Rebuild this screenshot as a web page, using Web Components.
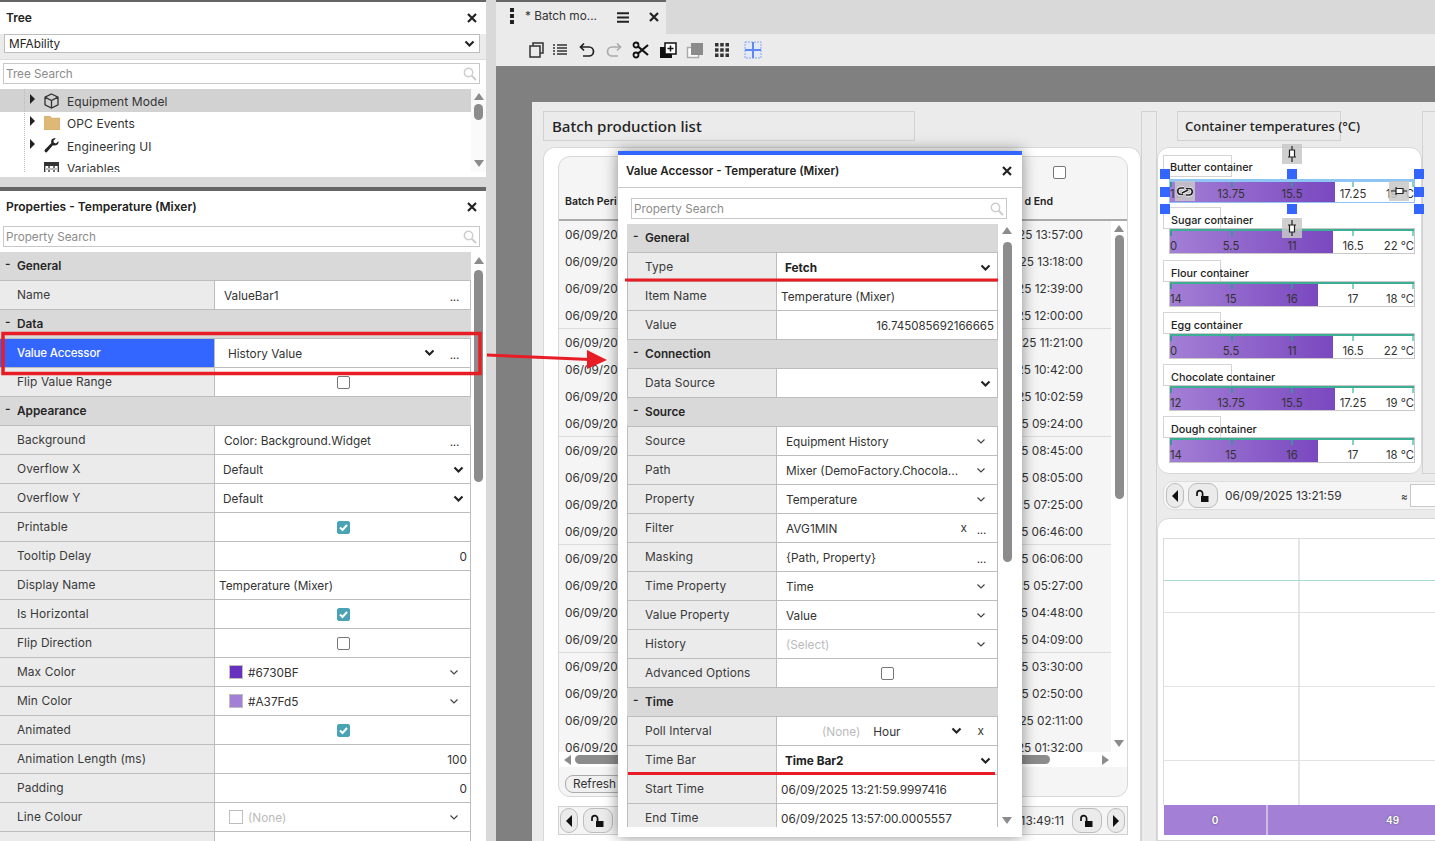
<!DOCTYPE html>
<html>
<head>
<meta charset="utf-8">
<title>Batch monitor</title>
<style>
    html, body { margin: 0; height: 100%; overflow: hidden; }
    body { font: 12px Inter, "Noto Sans", sans-serif; color: #262626; background: #d9d9d9; }
</style>
</head>
<body>
<app-shell>
    <tree-panel slot="side"></tree-panel>
    <props-panel slot="side">
        <prop-section>General</prop-section>
        <prop-row label="Name" pad="9" tail="dots">ValueBar1</prop-row>
        <prop-section>Data</prop-section>
        <prop-row label="Value Accessor" pad="13" tail="bold-dots" active>History Value</prop-row>
        <prop-row label="Flip Value Range" check="off"></prop-row>
        <prop-section>Appearance</prop-section>
        <prop-row label="Background" pad="9" tail="dots">Color: Background.Widget</prop-row>
        <prop-row label="Overflow X" pad="8" tail="bold">Default</prop-row>
        <prop-row label="Overflow Y" pad="8" tail="bold">Default</prop-row>
        <prop-row label="Printable" check="on"></prop-row>
        <prop-row label="Tooltip Delay" pad="8" align="right">0</prop-row>
        <prop-row label="Display Name" pad="4">Temperature (Mixer)</prop-row>
        <prop-row label="Is Horizontal" check="on"></prop-row>
        <prop-row label="Flip Direction" check="off"></prop-row>
        <prop-row label="Max Color" pad="14" swatch="#6730BF" tail="thin">#6730BF</prop-row>
        <prop-row label="Min Color" pad="14" swatch="#A37FD5" tail="thin">#A37Fd5</prop-row>
        <prop-row label="Animated" check="on"></prop-row>
        <prop-row label="Animation Length (ms)" pad="8" align="right">100</prop-row>
        <prop-row label="Padding" pad="8" align="right">0</prop-row>
        <prop-row label="Line Colour" pad="14" swatch="#ffffff" muted tail="thin">(None)</prop-row>
        <prop-row label=""></prop-row>
    </props-panel>
    <editor-tabs slot="main"></editor-tabs>
    <editor-tools slot="main"></editor-tools>
    <editor-canvas slot="main">
        <design-page>
            <title-box slot="left" wide="372">Batch production list</title-box>
            <batch-card slot="left"></batch-card>
            <title-box slot="right" wide="164" inset="20">Container temperatures (°C)</title-box>
            <white-card slot="right" high="327">
                <value-bar name="Butter container" box="69" fill="165" labels="12,13.75,15.5,17.25,19 °C" selected></value-bar>
                <value-bar name="Sugar container" box="58" fill="163" labels="0,5.5,11,16.5,22 °C"></value-bar>
                <value-bar name="Flour container" box="58" fill="148" labels="14,15,16,17,18 °C"></value-bar>
                <value-bar name="Egg container" box="58" fill="163" labels="0,5.5,11,16.5,22 °C"></value-bar>
                <value-bar name="Chocolate container" box="69" fill="165" labels="12,13.75,15.5,17.25,19 °C"></value-bar>
                <value-bar name="Dough container" box="58" fill="148" labels="14,15,16,17,18 °C"></value-bar>
            </white-card>
            <time-strip slot="right"></time-strip>
            <chart-card slot="right"></chart-card>
        </design-page>
    </editor-canvas>
    <accessor-dialog slot="over">
        <prop-section>General</prop-section>
        <prop-row label="Type" pad="8" strong tail="bold">Fetch</prop-row>
        <prop-row label="Item Name" pad="4">Temperature (Mixer)</prop-row>
        <prop-row label="Value" pad="4" align="right"><span style="font-size:11.500px">16.745085692166665</span></prop-row>
        <prop-section>Connection</prop-section>
        <prop-row label="Data Source" pad="8" tail="bold"></prop-row>
        <prop-section>Source</prop-section>
        <prop-row label="Source" pad="9" tail="thin">Equipment History</prop-row>
        <prop-row label="Path" pad="9" tail="thin">Mixer (DemoFactory.Chocola...</prop-row>
        <prop-row label="Property" pad="9" tail="thin">Temperature</prop-row>
        <prop-row label="Filter" pad="9" tail="x-dots">AVG1MIN</prop-row>
        <prop-row label="Masking" pad="9" tail="dots">{Path, Property}</prop-row>
        <prop-row label="Time Property" pad="9" tail="thin">Time</prop-row>
        <prop-row label="Value Property" pad="9" tail="thin">Value</prop-row>
        <prop-row label="History" pad="9" muted tail="thin">(Select)</prop-row>
        <prop-row label="Advanced Options" check="off"></prop-row>
        <prop-section>Time</prop-section>
        <prop-row label="Poll Interval" pad="45" tail="bold-x"><span style="color:#bbb">(None)</span><span style="margin-left:13px">Hour</span></prop-row>
        <prop-row label="Time Bar" pad="8" strong tail="bold">Time Bar2</prop-row>
        <prop-row label="Start Time" pad="4">06/09/2025 13:21:59.9997416</prop-row>
        <prop-row label="End Time" pad="4">06/09/2025 13:57:00.0005557</prop-row>
    </accessor-dialog>
    <red-marks slot="over"></red-marks>
</app-shell>

<script>
const ICONS = {
    close: `<svg width="12" height="12" viewBox="0 0 12 12"><path d="M2 2l8 8M10 2l-8 8" stroke="#222" stroke-width="2.2" fill="none"/></svg>`,
    bold: `<svg width="11" height="8" viewBox="0 0 11 8"><path d="M1.5 1.5l4 4 4-4" stroke="#222" stroke-width="2.1" fill="none"/></svg>`,
    thin: `<svg width="10" height="7" viewBox="0 0 10 7"><path d="M1.5 1.5l3.5 3.5 3.5-3.5" stroke="#444" stroke-width="1.2" fill="none"/></svg>`,
    search: `<svg width="14" height="14" viewBox="0 0 14 14"><circle cx="5.5" cy="5.5" r="4.2" stroke="#ccc" stroke-width="1.4" fill="none"/><path d="M8.6 8.6l4.4 4.4" stroke="#ccc" stroke-width="2"/></svg>`,
    cube: `<svg width="15" height="16" viewBox="0 0 15 16"><path d="M7.5 1L14 4.2v7.6L7.5 15 1 11.8V4.2zM1 4.2l6.5 3.4L14 4.2M7.5 7.6V15" stroke="#333" stroke-width="1.3" fill="none"/></svg>`,
    folder: `<svg width="16" height="14" viewBox="0 0 16 14"><path d="M0 0h6l1.5 2H16v12H0z" fill="#deb877" stroke="#cfa862" stroke-width=".5"/></svg>`,
    wrench: `<svg width="15" height="15" viewBox="0 0 15 15"><path d="M14.4 3.2l-2.500 2.200-2-.6-.5-2L11.800.4C9.600-.4 7.200 1 7.100 3.300c0 .6.100 1.100.3 1.600L.8 11.700c-.8 1 .1 2.800 1.600 2.700l.6-.4 5.900-6.700c2.700.9 6.500-1.100 5.500-4.100z" fill="#222"/></svg>`,
    table: `<svg width="15" height="13" viewBox="0 0 15 13"><path d="M0 0h15v4H0z" fill="#333"/><path d="M.7 4v9M14.300 4v9M5 4v9M10 4v9" stroke="#333" stroke-width="1.400"/><path d="M1 7h13" stroke="#bbb" stroke-width="2"/></svg>`,
    unlock: `<svg width="16" height="14" viewBox="0 0 16 14"><path d="M2 7V4.500a2.800 2.800 0 0 1 5.600 0V8" stroke="#111" stroke-width="1.700" fill="none"/><rect x="6" y="7" width="7.500" height="6" fill="#111"/></svg>`,
    pin: `<svg width="12" height="16" viewBox="0 0 12 16"><path d="M6 0v4M3.500 4h5v7h-5zM2 11h8M6 11v5" stroke="#222" stroke-width="1.200" fill="#fff"/></svg>`,
    link: `<svg width="16" height="11" viewBox="0 0 16 11"><path d="M7 2H4a3.200 3.200 0 0 0 0 6.500h2M9 2.500h3a3.200 3.200 0 0 1 0 6.500H9M5 7l6-3" stroke="#fff" stroke-width="3.200" fill="none"/><path d="M7 2H4a3.200 3.200 0 0 0 0 6.500h2M9 2.500h3a3.200 3.200 0 0 1 0 6.500H9M5 7l6-3" stroke="#222" stroke-width="1.600" fill="none"/></svg>`
};

// small helper so every element sets up the same way
class Base extends HTMLElement {
    constructor() {
        super();
        this.attachShadow({ mode: "open" });
    }
    render(html) {
        this.shadowRoot.innerHTML = html;
    }
}

class AppShell extends Base {
    connectedCallback() {
        this.render(`
            <style>
                :host { display: flex; position: relative; width: 1435px; height: 841px; overflow: hidden; }
                .side { width: 486px; display: flex; flex-direction: column; margin-right: 10px; flex: none; }
                .main { flex: 1; min-width: 0; display: flex; flex-direction: column; }
            </style>
            <div class="side"><slot name="side"></slot></div>
            <div class="main"><slot name="main"></slot></div>
            <slot name="over"></slot>
        `);
    }
}

class PanelHead extends Base {
    connectedCallback() {
        this.render(`
            <style>
                :host { display: flex; align-items: center; justify-content: space-between; padding: 0 8px 0 6px; background: #fff; font-weight: 600; font-size: 12px; color: #222; }
                svg { display: block; }
                span { margin-top: -1px; }
            </style>
            <span><slot></slot></span>${ICONS.close}
        `);
    }
}

class SearchBox extends Base {
    connectedCallback() {
        this.render(`
            <style>
                :host { display: flex; align-items: center; justify-content: space-between; box-sizing: border-box; height: 21px; border: 1px solid #c8c8c8; background: #fff; color: #8c8c8c; padding: 0 2px; font-size: 11.700px; }
            </style>
            <slot></slot>${ICONS.search}
        `);
    }
}

class ScrollBar extends Base {
    connectedCallback() {
        const top = this.getAttribute("top") || 0;
        const size = this.getAttribute("size") || 100;
        const lead = this.getAttribute("lead") || 5;
        this.render(`
            <style>
                :host { display: flex; flex-direction: column; align-items: center; width: 15px; flex: none; background: #fafafa; }
                i { display: block; width: 0; height: 0; border-left: 5px solid transparent; border-right: 5px solid transparent; }
                .up { border-bottom: 7px solid #8c8c8c; margin-top: ${lead}px; }
                .down { border-top: 7px solid #8c8c8c; margin-top: auto; margin-bottom: 5px; }
                b { display: block; width: 9px; height: ${size}px; margin-top: ${top}px; border-radius: 5px; background: #8c8c8c; }
            </style>
            <i class="up"></i><b></b><i class="down"></i>
        `);
    }
}

class TreePanel extends Base {
    connectedCallback() {
        const row = (icon, text, sel, arrow = true) => `
            <div class="row ${sel ? "sel" : ""}">
                <span class="arrow">${arrow ? "<i></i>" : ""}</span>
                <span class="icon">${icon}</span><span class="txt">${text}</span>
            </div>`;
        this.render(`
            <style>
                :host { display: flex; flex-direction: column; height: 177px; border-top: 2px solid #666; box-sizing: border-box; background: #fff; flex: none; }
                panel-head { height: 32px; flex: none; }
                .band { background: #ebebeb; height: 26px; flex: none; box-sizing: border-box; padding: 0 6px 0 4px; border-bottom: 1px solid #dedede; }
                .pick { display: flex; align-items: center; justify-content: space-between; height: 19px; box-sizing: border-box; border: 1px solid #bdbdbd; background: #fff; padding: 0 4px; font-size: 11.800px; }
                .find { padding: 3px 6px 5px 3px; flex: none; }
                .list { display: flex; height: 83px; flex: none; overflow: hidden; }
                .rows { flex: 1; overflow: hidden; position: relative; }
                .rows::before { content: ""; position: absolute; left: 24px; top: 0; bottom: 0; border-left: 1px dotted #bbb; }
                .row { display: flex; align-items: center; height: 22.500px; font-size: 12px; letter-spacing: .1px; color: #333; }
                .row.sel { background: #d2d2d2; height: 23px; }
                .txt { padding-top: 1px; }
                .arrow { padding-left: 30px; width: 14px; }
                .arrow i { display: block; width: 0; height: 0; border-top: 5px solid transparent; border-bottom: 5px solid transparent; border-left: 5px solid #222; transform: translateY(-2px); }
                .icon { width: 23px; display: flex; align-items: center; }
            </style>
            <panel-head>Tree</panel-head>
            <div class="band"><div class="pick"><span>MFAbility</span>${ICONS.bold}</div></div>
            <div class="find"><search-box>Tree Search</search-box></div>
            <div class="list">
                <div class="rows">
                    ${row(ICONS.cube, "Equipment Model", true)}
                    ${row(ICONS.folder, "OPC Events")}
                    ${row(ICONS.wrench, "Engineering UI")}
                    ${row(ICONS.table, "Variables", false, false)}
                </div>
                <scroll-bar lead="4" top="4" size="16"></scroll-bar>
            </div>
        `);
    }
}

class PropsPanel extends Base {
    connectedCallback() {
        this.render(`
            <style>
                :host { display: flex; flex-direction: column; flex: 1; min-height: 0; margin-top: 10px; border-top: 4px solid #666; background: #fff; --check-shift: 1px; }
                panel-head { height: 32px; flex: none; }
                .find { padding: 3px 6px 5px 3px; flex: none; }
                .list { flex: 1; min-height: 0; display: flex; overflow: hidden; }
                .rows { flex: 1; min-width: 0; }
                scroll-bar { background: #fff; height: 620px; }
            </style>
            <panel-head>Properties - Temperature (Mixer)</panel-head>
            <div class="find"><search-box>Property Search</search-box></div>
            <div class="list">
                <div class="rows"><slot></slot></div>
                <scroll-bar lead="5" top="6" size="212"></scroll-bar>
            </div>
        `);
    }
}

class PropSection extends Base {
    connectedCallback() {
        this.render(`
            <style>
                :host { display: flex; align-items: center; box-sizing: border-box; height: 29px; background: #d9d9d9; border-bottom: 1px solid #bdbdbd; font-weight: 600; font-size: 11.800px; color: #262626; }
                span { width: 17px; padding-left: 5px; box-sizing: border-box; margin-top: -4px; }
            </style>
            <span>-</span><slot></slot>
        `);
    }
}

class PropRow extends Base {
    connectedCallback() {
        const pad = this.getAttribute("pad") || 0;
        const check = this.getAttribute("check");
        const tail = this.getAttribute("tail") || "";
        const swatch = this.getAttribute("swatch");
        const tails = {
            "": "",
            dots: `<em class="dots">...</em>`,
            bold: `<span class="chev b">${ICONS.bold}</span>`,
            thin: `<span class="chev t">${ICONS.thin}</span>`,
            "bold-dots": `<span class="chev bd">${ICONS.bold}</span><em class="dots">...</em>`,
            "x-dots": `<span class="x">x</span><em class="dots">...</em>`,
            "bold-x": `<span class="chev bx">${ICONS.bold}</span><span class="x2">x</span>`
        };
        let inner = `<span class="text"><slot></slot></span>${tails[tail]}`;
        if (check) {
            inner = `<span class="box ${check}">${check === "on" ? `<svg width="13" height="13" viewBox="0 0 13 13"><path d="M3 6.500l2.500 2.500 4.500-5" stroke="#fff" stroke-width="2" fill="none"/></svg>` : ""}</span>`;
        } else if (swatch) {
            inner = `<span class="sw" style="background:${swatch}"></span>` + inner;
        }
        this.render(`
            <style>
                :host { display: grid; grid-template-columns: var(--label-w, 214px) 1fr; box-sizing: border-box; height: 29px; border-bottom: 1px solid #bdbdbd; font-size: 11.800px; color: #333; }
                .l { display: flex; align-items: center; padding: 0 0 1px 17px; background: #ebebeb; color: #3a3a3a; font-size: 11.900px; letter-spacing: .1px; }
                :host([active]) .l { background: #3366ff; color: #fff; font-weight: 500; font-size: 11.500px; letter-spacing: -.15px; }
                .v { display: flex; align-items: center; background: #fff; border-left: 1px solid #bdbdbd; border-right: 1px solid #bdbdbd; padding-left: ${pad}px; min-width: 0; position: relative; }
                :host([strong]) .text { font-weight: 700; color: #222; }
                :host([muted]) .text { color: #bbb; }
                :host([align="right"]) .text { margin-left: auto; padding-right: 3px; }
                .text { white-space: nowrap; padding-top: 2px; }
                .dots { position: absolute; right: 11px; top: 9px; font-style: normal; letter-spacing: -.3px; }
                .chev { position: absolute; display: flex; }
                .b { right: 6px; top: 11px; }
                .t { right: 11px; top: 11px; }
                .bd { right: 35px; top: 10px; }
                .bx { right: 35px; top: 10px; }
                .x { position: absolute; right: 30px; top: 7px; }
                .x2 { position: absolute; right: 13px; top: 7px; }
                .box { box-sizing: border-box; width: 13px; height: 13px; margin: 0 auto; border: 1px solid #777; border-radius: 2px; background: #fff; display: block; transform: translateX(var(--check-shift, 0)); }
                .box.on { background: #4aa3b5; border-color: #4aa3b5; }
                .box svg { display: block; margin: -1px; }
                .sw { box-sizing: border-box; width: 14px; height: 14px; margin-right: 5px; border: 1px solid #bdbdbd; flex: none; }
            </style>
            <div class="l">${this.getAttribute("label") || ""}</div>
            <div class="v">${inner}</div>
        `);
    }
}

class EditorTabs extends Base {
    connectedCallback() {
        this.render(`
            <style>
                :host { display: flex; height: 34px; background: #d9d9d9; flex: none; }
                .tab { display: flex; align-items: center; width: 170px; box-sizing: border-box; border-top: 2px solid #666; background: #ebebeb; padding-left: 14px; font-size: 11.800px; color: #333; }
                .menu { display: flex; flex-direction: column; gap: 2px; width: 16px; margin-top: -5px; }
                .menu i { width: 4px; height: 4px; background: #222; }
                .name { width: 91px; margin: -5px 0 0 -1px; padding-right: 1px; white-space: nowrap; }
                .ham { width: 31px; height: 11px; margin-top: -1px; }
                .close { display: flex; margin-top: -3px; }
            </style>
            <div class="tab">
                <div class="menu"><i></i><i></i><i></i></div>
                <span class="name">* Batch mo...</span>
                <svg class="ham" viewBox="0 0 31 11" preserveAspectRatio="xMinYMid"><path d="M0 1.200h12M0 5.500h12M0 9.800h12" stroke="#222" stroke-width="2"/></svg>
                <span class="close">${ICONS.close}</span>
            </div>
        `);
    }
}

class EditorTools extends Base {
    connectedCallback() {
        const tools = [
            `<path d="M2 5h10v11H2zM5 5V2h10v10h-3" stroke="#333" stroke-width="1.500" fill="none"/>`,
            `<path d="M2 4h2M6 4h10M2 7h2M6 7h10M2 10h2M6 10h10M2 13h2M6 13h10" stroke="#333" stroke-width="1.500" fill="none"/>`,
            `<path d="M6 2.500L2.500 6 6 9.500M3 6h8a4 4 0 0 1 0 9H5" stroke="#222" stroke-width="1.700" fill="none"/>`,
            `<path d="M12 2.500L15.500 6 12 9.500M15 6H7a4 4 0 0 0 0 9h6" stroke="#aaa" stroke-width="1.700" fill="none"/>`,
            `<circle cx="4" cy="4" r="2.500" stroke="#111" stroke-width="1.800" fill="none"/><circle cx="4" cy="14" r="2.500" stroke="#111" stroke-width="1.800" fill="none"/><path d="M6 5.500L16 14M6 12.500L16 4" stroke="#111" stroke-width="2.200"/>`,
            `<path d="M1 6h12v11H1z" fill="#111"/><path d="M6 2h11v11H6z" fill="#fff" stroke="#111" stroke-width="1.500"/><path d="M11.500 4.500v6M8.500 7.500h6" stroke="#111" stroke-width="1.500"/>`,
            `<path d="M1.500 6.500h11v10h-11z" fill="#fff" stroke="#aaa" stroke-width="1.500"/><path d="M5 2h12v12H5z" fill="#8c8c8c"/>`,
            `<path d="M2 2h3.500v3.500H2zM7.200 2h3.500v3.500H7.200zM12.500 2H16v3.500h-3.500zM2 7.200h3.500v3.500H2zM7.200 7.200h3.500v3.500H7.200zM12.500 7.200H16v3.500h-3.500zM2 12.500h3.500V16H2zM7.200 12.500h3.500V16H7.200zM12.500 12.500H16V16h-3.500z" fill="#333"/>`
        ];
        const svg = tools.map((p, i) => `<svg class="t${i}" width="18" height="18" viewBox="0 0 18 18">${p}</svg>`).join("");
        this.render(`
            <style>
                :host { display: flex; align-items: center; gap: 9px; height: 32px; box-sizing: border-box; padding-left: 32px; background: #ebebeb; flex: none; }
                svg { display: block; }
                .t1 { margin-left: -4px; }
                .last { margin-left: 4px; }
            </style>
            ${svg}
            <svg class="last" width="18" height="18" viewBox="0 0 18 18"><path d="M1 1h16v16H1z" stroke="#86a4f6" stroke-width="1" stroke-dasharray="2 1" fill="#e4e9f8"/><path d="M9 1v16M1 9h16" stroke="#5f87f5" stroke-width="2"/></svg>
        `);
    }
}

class EditorCanvas extends Base {
    connectedCallback() {
        this.render(`
            <style>
                :host { display: block; flex: 1; min-height: 0; background: #808080; padding: 36px 0 0 36px; overflow: hidden; }
            </style>
            <slot></slot>
        `);
    }
}

class DesignPage extends Base {
    connectedCallback() {
        this.render(`
            <style>
                :host { display: flex; height: 739px; background: #ebebeb; padding: 9px 0 0 11px; box-sizing: border-box; align-items: stretch; overflow: hidden; }
                .left { width: 598px; flex: none; display: flex; flex-direction: column; }
                .strip { width: 14px; flex: none; border-left: 1px solid #d2d2d2; border-right: 1px solid #d2d2d2; border-top: 1px solid #d2d2d2; }
                .right { width: 265px; flex: none; display: flex; flex-direction: column; }
                .strip2 { width: 13px; flex: none; height: 363px; border-left: 1px solid #d2d2d2; border-top: 1px solid #d2d2d2; border-bottom: 1px solid #d2d2d2; box-sizing: border-box; }
            </style>
            <div class="left"><slot name="left"></slot></div>
            <div class="strip"></div>
            <div class="right"><slot name="right"></slot></div>
            <div class="strip2"></div>
        `);
    }
}

class TitleBox extends Base {
    connectedCallback() {
        const inset = this.getAttribute("inset");
        this.render(`
            <style>
                :host { display: flex; align-items: center; box-sizing: border-box; height: 30px; flex: none; width: ${this.getAttribute("wide")}px; margin-left: ${inset || 0}px; margin-bottom: 6px; padding-left: ${inset ? 7 : 8}px; border: 1px solid #d2d2d2; background: #ebebeb; font: 500 ${inset ? 13 : 15.100}px "Noto Sans", sans-serif; color: #222; white-space: nowrap; }
            </style>
            <slot></slot>
        `);
    }
}

class WhiteCard extends Base {
    connectedCallback() {
        this.render(`
            <style>
                :host { display: block; box-sizing: border-box; height: ${this.getAttribute("high")}px; flex: none; background: #fff; border: 1px solid #d8d8d8; border-radius: 12px; padding: 7px 0 0 5px; position: relative; z-index: 1; }
            </style>
            <slot></slot>
        `);
    }
}

class ValueBar extends Base {
    connectedCallback() {
        const fill = +this.getAttribute("fill");
        const labels = this.getAttribute("labels").split(",");
        const selected = this.hasAttribute("selected");
        const ticks = labels.map((_, i) => {
            const pos = i * 61;
            return `<i style="background:${pos < fill ? "#3f8f9c" : "#86d3bd"}"></i>`;
        }).join("");
        const texts = labels.map((t, i) => `<span class="${i === 0 ? "first" : i === 4 ? "last" : ""}"><u>${t}</u></span>`).join("");
        const over = !selected ? "" : `
            <b class="h" style="left:-10px;top:-11px"></b><b class="h" style="left:117px;top:-11px"></b><b class="h" style="left:244px;top:-11px"></b>
            <b class="h" style="left:-10px;top:7px"></b><b class="h" style="left:244px;top:7px"></b>
            <b class="h" style="left:-10px;top:24px"></b><b class="h" style="left:117px;top:24px"></b><b class="h" style="left:244px;top:24px"></b>
            <s class="act" style="left:112px;top:-36px">${ICONS.pin}</s>
            <s class="act" style="left:5px;top:1px">${ICONS.link}</s>
            <s class="act" style="left:219px;top:1px"><span style="transform:rotate(90deg);display:flex">${ICONS.pin}</span></s>
            <s class="act" style="left:112px;top:38px"><span style="transform:rotate(180deg);display:flex">${ICONS.pin}</span></s>`;
        this.render(`
            <style>
                :host { display: block; height: 52.300px; position: relative; font-size: 11px; color: #222; }
                .name { box-sizing: border-box; width: ${this.getAttribute("box")}px; height: 22px; border: 1px solid #d4d4d4; padding: ${selected ? 5 : 6}px 0 0 ${selected ? 6 : 7}px; line-height: 14px; font-weight: 500; font-size: 10.800px; white-space: nowrap; }
                .bar { position: relative; box-sizing: border-box; width: 246px; height: ${selected ? 24 : 26}px; margin: ${selected ? 2 : -1}px 0 0 6px; border: 1px solid ${selected ? "#8ec5f5" : "#c8c8c8"}; background: linear-gradient(90deg, #a37fd5, #7a48c0) 0 0 / ${fill}px 100% no-repeat #fff; }
                .top { height: 2px; background: ${selected ? "#8ec5f5" : "#3cae93"}; }
                .ticks, .texts { display: flex; justify-content: space-between; }
                .ticks i { display: block; width: 2px; height: 5px; }
                .texts { margin-top: ${selected ? 0 : 3}px; line-height: 15px; color: #333; }
                .texts span { width: 0; display: flex; justify-content: center; white-space: nowrap; font-size: 11.300px; }
                .texts .first { justify-content: flex-start; }
                .texts .last { justify-content: flex-end; }
                .h { position: absolute; width: 10px; height: 10px; background: #3366ff; z-index: 2; }
                .act { position: absolute; width: 20px; height: 20px; background: rgba(200,200,200,.85); display: flex; align-items: center; justify-content: center; text-decoration: none; z-index: 3; }
                u { text-decoration: none; }
            </style>
            <div class="name">${this.getAttribute("name")}</div>
            <div class="bar">
                <div class="top"></div>
                <div class="ticks">${ticks}</div>
                <div class="texts">${texts}</div>
                ${over}
            </div>
        `);
    }
}

class LockBtn extends Base {
    connectedCallback() {
        const kind = this.getAttribute("kind");
        const tri = kind === "prev"
            ? `<i style="border-right:6px solid #111;border-top:6px solid transparent;border-bottom:6px solid transparent"></i>`
            : `<i style="border-left:6px solid #111;border-top:6px solid transparent;border-bottom:6px solid transparent"></i>`;
        this.render(`
            <style>
                :host { display: flex; align-items: center; justify-content: center; box-sizing: border-box; height: 25px; width: ${kind === "lock" ? 30 : 18}px; flex: none; border: 1px solid #bdbdbd; border-radius: 9px; background: #ebebeb; }
                i { display: block; width: 0; height: 0; }
            </style>
            ${kind === "lock" ? ICONS.unlock : tri}
        `);
    }
}

class BatchCard extends Base {
    connectedCallback() {
        // the dialog covers the middle of this table, only the visible ends of the dates are written
        const ends = ["13:57:00","13:18:00","12:39:00","12:00:00","11:21:00","10:42:00","10:02:59","09:24:00","08:45:00","08:05:00","07:25:00","06:46:00","06:06:00","05:27:00","04:48:00","04:09:00","03:30:00","02:50:00","02:11:00","01:32:00"];
        const rows = ends.map((e, i) => `
            <div class="row ${i % 4 === 3 ? "sep" : ""}">
                <span>06/09/20</span><span>25 ${e}</span>
            </div>`).join("");
        this.render(`
            <style>
                :host { display: block; flex: 1; min-height: 0; box-sizing: border-box; background: #fff; border: 1px solid #d8d8d8; border-bottom: 0; border-radius: 12px 12px 0 0; padding: 8px 12px 0 14px; position: relative; font-size: 11.800px; color: #333; }
                .table { height: 641px; box-sizing: border-box; border: 1px solid #d8d8d8; border-radius: 12px; background: #f5f5f5; display: flex; flex-direction: column; overflow: hidden; }
                .head { height: 64px; flex: none; box-sizing: border-box; border-bottom: 2px solid #aaa; display: flex; justify-content: space-between; align-items: flex-end; padding: 0 74px 11px 6px; font-weight: 600; font-size: 10.500px; color: #222; white-space: nowrap; }
                .cb { position: absolute; top: 18px; right: 74px; box-sizing: border-box; width: 13px; height: 13px; border: 1px solid #777; border-radius: 2px; background: #fff; }
                .mid { flex: 1; min-height: 0; display: flex; }
                .rows { flex: 1; min-width: 0; overflow: hidden; }
                .row { display: flex; justify-content: space-between; height: 27px; box-sizing: border-box; padding: 7px 28px 0 6px; white-space: nowrap; }
                .row.sep { border-bottom: 1px solid #dcdcdc; }
                scroll-bar { width: 16px; background: #fff; }
                .hbar { flex: none; height: 15px; background: #fff; display: flex; align-items: center; padding-left: 5px; }
                .hbar i { width: 0; height: 0; border-top: 5px solid transparent; border-bottom: 5px solid transparent; }
                .hbar b { display: block; height: 9px; width: 475px; margin-left: 4px; background: #8c8c8c; border-radius: 5px; }
                .foot { flex: none; height: 29px; box-sizing: border-box; padding: 8px 0 0 6px; }
                .refresh { display: inline-block; border: 1px solid #aaa; border-radius: 8px; padding: 0 7px; line-height: 16px; background: #f0f0f0; }
                .bar { margin-top: 9px; height: 29px; box-sizing: border-box; border: 1px solid #d0d0d0; background: #f5f5f5; display: flex; align-items: center; padding: 0 2px 0 1px; gap: 5px; }
                .bar span { margin-left: auto; margin-right: 3px; white-space: nowrap; }
            </style>
            <div class="table">
                <div class="head"><span>Batch Peri</span><span>d End</span></div>
                <div class="cb"></div>
                <div class="mid">
                    <div class="rows">${rows}</div>
                    <scroll-bar lead="4" top="3" size="264"></scroll-bar>
                </div>
                <div class="hbar">
                    <i style="border-right:7px solid #8c8c8c"></i><b></b>
                    <i style="border-left:7px solid #8c8c8c;margin-left:52px"></i>
                </div>
                <div class="foot"><span class="refresh">Refresh</span></div>
            </div>
            <div class="bar">
                <lock-btn kind="prev"></lock-btn><lock-btn kind="lock"></lock-btn>
                <span>13:49:11</span>
                <lock-btn kind="lock"></lock-btn><lock-btn kind="next"></lock-btn>
            </div>
        `);
    }
}

class TimeStrip extends Base {
    connectedCallback() {
        this.render(`
            <style>
                :host { display: flex; align-items: center; gap: 4px; flex: none; box-sizing: border-box; width: 290px; height: 29px; margin: 7px 0 8px 6px; padding-left: 2px; background: #f5f5f5; border: 1px solid #dedede; border-radius: 10px 0 0 10px; font-size: 11.900px; color: #333; }
                span { margin-left: 3px; white-space: nowrap; width: 172px; }
                small { font-size: 10px; width: 6px; margin-right: -1px; }
                .in { width: 40px; height: 23px; box-sizing: border-box; border: 1px solid #c8c8c8; background: #fff; }
            </style>
            <lock-btn kind="prev"></lock-btn><lock-btn kind="lock"></lock-btn>
            <span>06/09/2025 13:21:59</span>
            <small>≈</small><div class="in"></div>
        `);
    }
}

class ChartCard extends Base {
    connectedCallback() {
        this.render(`
            <style>
                :host { display: block; flex: 1; width: 290px; background: #fff; border: 1px solid #d8d8d8; border-radius: 12px 0 0 0; box-sizing: border-box; padding: 19px 0 0 5px; position: relative; }
                .plot { height: 267px; display: grid; grid-template-rows: 42px 32px 74px 74px 1fr; border-left: 1px solid #dcdcdc; border-top: 1px solid #dcdcdc; box-sizing: border-box; background: linear-gradient(#e6e6e6, #e6e6e6) 134px 0 / 2px 100% no-repeat; }
                .plot div { border-bottom: 1px solid #e2e2e2; }
                .plot .teal { border-bottom-color: #a5dccb; }
                .plot div:last-child { border: 0; }
                .bars { display: grid; grid-template-columns: 102px 1fr; height: 30px; gap: 2px; margin-left: 1px; background: #cdbde4; color: #fff; font-size: 10px; font-weight: 600; text-shadow: 0 0 2px #555; }
                .bars span { display: flex; align-items: center; justify-content: center; background: #a37fd5; padding-bottom: 1px; }
                .bars span + span { justify-content: flex-start; padding-left: 118px; }
            </style>
            <div class="plot"><div class="teal"></div><div></div><div></div><div></div><div></div></div>
            <div class="bars"><span>0</span><span>49</span></div>
        `);
    }
}

class AccessorDialog extends Base {
    connectedCallback() {
        this.render(`
            <style>
                :host { position: absolute; left: 618px; top: 151px; width: 404px; height: 686px; box-sizing: border-box; z-index: 5; display: flex; flex-direction: column; background: #fff; border-top: 4px solid #3366ff; box-shadow: 0 0 14px rgba(0,0,0,.45); --label-w: 148px; }
                .title { display: flex; flex: none; height: 32px; padding: 0 9px 0 8px; align-items: center; justify-content: space-between; border-bottom: 1px solid #c8c8c8; font-weight: 600; font-size: 11.600px; color: #222; }
                .find { flex: none; padding: 10px 15px 5px 13px; }
                .list { flex: none; height: 605px; display: flex; overflow: hidden; padding-left: 9px; }
                .rows { width: 371px; height: 603px; flex: none; overflow: hidden; }
                ::slotted(prop-row) { border-left: 1px solid #bdbdbd; }
                ::slotted(prop-section) { padding-left: 1px; }
                scroll-bar { background: #fff; width: 18px; }
            </style>
            <div class="title"><span>Value Accessor - Temperature (Mixer)</span>${ICONS.close}</div>
            <div class="find"><search-box>Property Search</search-box></div>
            <div class="list">
                <div class="rows"><slot></slot></div>
                <scroll-bar lead="3" top="8" size="320"></scroll-bar>
            </div>
        `);
    }
}

class RedMarks extends Base {
    connectedCallback() {
        this.render(`
            <style>
                :host { position: absolute; inset: 0; z-index: 6; pointer-events: none; }
                svg { display: block; }
            </style>
            <svg width="1435" height="841" viewBox="0 0 1435 841">
                <rect x="3" y="333.500" width="477" height="40" fill="none" stroke="#e81c24" stroke-width="3.500"/>
                <path d="M487 355L590 359.500" stroke="#e81c24" stroke-width="3"/>
                <path d="M587 350L607 360L587 369z" fill="#e81c24"/>
                <path d="M625 280H998" stroke="#e81c24" stroke-width="3"/>
                <path d="M628 773.500H995" stroke="#e81c24" stroke-width="3"/>
            </svg>
        `);
    }
}

customElements.define("app-shell", AppShell);
customElements.define("panel-head", PanelHead);
customElements.define("search-box", SearchBox);
customElements.define("scroll-bar", ScrollBar);
customElements.define("tree-panel", TreePanel);
customElements.define("props-panel", PropsPanel);
customElements.define("prop-section", PropSection);
customElements.define("prop-row", PropRow);
customElements.define("editor-tabs", EditorTabs);
customElements.define("editor-tools", EditorTools);
customElements.define("editor-canvas", EditorCanvas);
customElements.define("design-page", DesignPage);
customElements.define("title-box", TitleBox);
customElements.define("white-card", WhiteCard);
customElements.define("value-bar", ValueBar);
customElements.define("lock-btn", LockBtn);
customElements.define("batch-card", BatchCard);
customElements.define("time-strip", TimeStrip);
customElements.define("chart-card", ChartCard);
customElements.define("accessor-dialog", AccessorDialog);
customElements.define("red-marks", RedMarks);
</script>
</body>
</html>
